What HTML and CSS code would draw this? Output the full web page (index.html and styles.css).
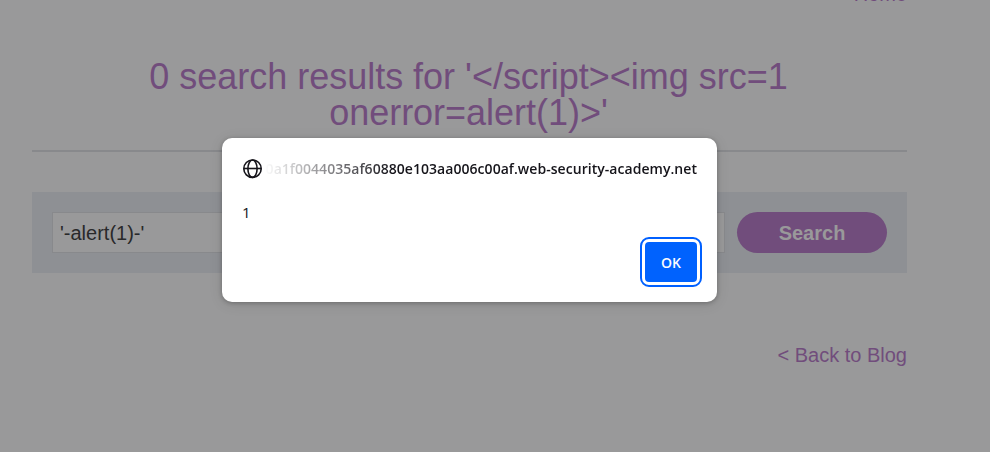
FILE: index.html
```html
<!DOCTYPE html>
<html lang="en">
<head>
<meta charset="utf-8">
<title>Blog search</title>
<link rel="stylesheet" href="styles.css">
</head>
<body>
<main class="page">
  <nav class="top-nav"><a class="link">Home</a></nav>
  <h1 class="heading">0 search results for '&lt;/script&gt;&lt;img src=1<br>onerror=alert(1)&gt;'</h1>
  <form class="search">
    <input class="field" type="text" value="'-alert(1)-'" aria-label="Search">
    <button class="search-button" type="button">Search</button>
  </form>
  <div class="back"><a class="link">&lt; Back to Blog</a></div>
</main>
<section class="dialog" role="alertdialog">
  <header class="dialog-header">
    <svg class="globe" viewBox="0 0 20 20" fill="none" stroke="#15141a" stroke-width="1.6">
      <circle cx="10.5" cy="9.7" r="8.7"/>
      <ellipse cx="10.5" cy="9.7" rx="4.6" ry="8.7"/>
      <path d="M1.8 9.5h17.4"/>
    </svg>
    <div class="host"><span class="host-text">0a1f0044035af60880e103aa006c00af.web-security-academy.net</span></div>
  </header>
  <p class="message">1</p>
  <footer class="dialog-footer"><button class="ok" type="button">OK</button></footer>
</section>
</body>
</html>
```
FILE: styles.css
```css
* { box-sizing: border-box; }
body {
  margin: 0;
  height: 452px;
  overflow: hidden;
  background: #99999a;
  font-family: "Liberation Sans", Arial, sans-serif;
  color: #714d7c;
}
.page { width: 875px; margin-left: 32px; }
.top-nav {
  display: flow-root;
  height: 59px;
  text-align: right;
  font-size: 20px;
  line-height: 24px;
}
.top-nav .link { display: block; margin-top: -18px; }
.heading {
  margin: 0;
  height: 93px;
  padding-right: 2px;
  border-bottom: 2px solid #88898c;
  font-size: 36px;
  font-weight: 400;
  line-height: 36px;
  letter-spacing: -.02px;
  text-align: center;
  white-space: nowrap;
}
.search {
  display: flex;
  gap: 12px;
  margin-top: 40px;
  padding: 20px;
  height: 81px;
  background: #8e9094;
}
.field {
  flex: 1;
  min-width: 0;
  height: 41px;
  padding: 2px 7px 0;
  border: 1px solid #88898c;
  background: #99999a;
  color: #29292a;
  font: 20px "Liberation Sans", Arial, sans-serif;
}
.search-button {
  width: 150px;
  height: 41px;
  padding: 2px 0 0;
  border: 0;
  border-radius: 21px;
  background: #714d7c;
  color: #99999a;
  font: bold 20px "Liberation Sans", Arial, sans-serif;
}
.back { margin-top: 70px; font-size: 20px; line-height: 24px; text-align: right; }
.dialog {
  position: absolute;
  left: 222px;
  top: 138px;
  width: 495px;
  height: 164px;
  padding: 20px;
  border-radius: 10px;
  background: #fff;
  box-shadow: 0 1px 4px rgba(0, 0, 0, .25), 0 2px 14px rgba(0, 0, 0, .1);
  color: #15141a;
  font-family: "Open Sans", "Noto Sans", sans-serif;
}
.dialog-header { display: flex; align-items: center; gap: 2px; height: 22px; }
.globe { width: 20px; height: 20px; flex: none; }
.host {
  display: flex;
  justify-content: flex-end;
  flex: 1;
  min-width: 0;
  overflow: hidden;
  font-size: 14px;
  font-weight: 600;
  line-height: 22px;
  white-space: nowrap;
  -webkit-mask-image: linear-gradient(to right, transparent, #000 128px);
  mask-image: linear-gradient(to right, transparent, #000 128px);
}
.host-text { letter-spacing: .045px; }
.message { margin: 22px 0 0; height: 20px; font-size: 15px; line-height: 20px; }
.dialog-footer { display: flex; justify-content: flex-end; margin-top: 20px; }
.ok {
  width: 52px;
  height: 40px;
  padding: 0;
  border: 0;
  border-radius: 4px;
  outline: 2px solid #0060ff;
  outline-offset: 3px;
  background: #0062fe;
  color: #fbfbfe;
  font: 600 14px "Open Sans", "Noto Sans", sans-serif;
}
```
